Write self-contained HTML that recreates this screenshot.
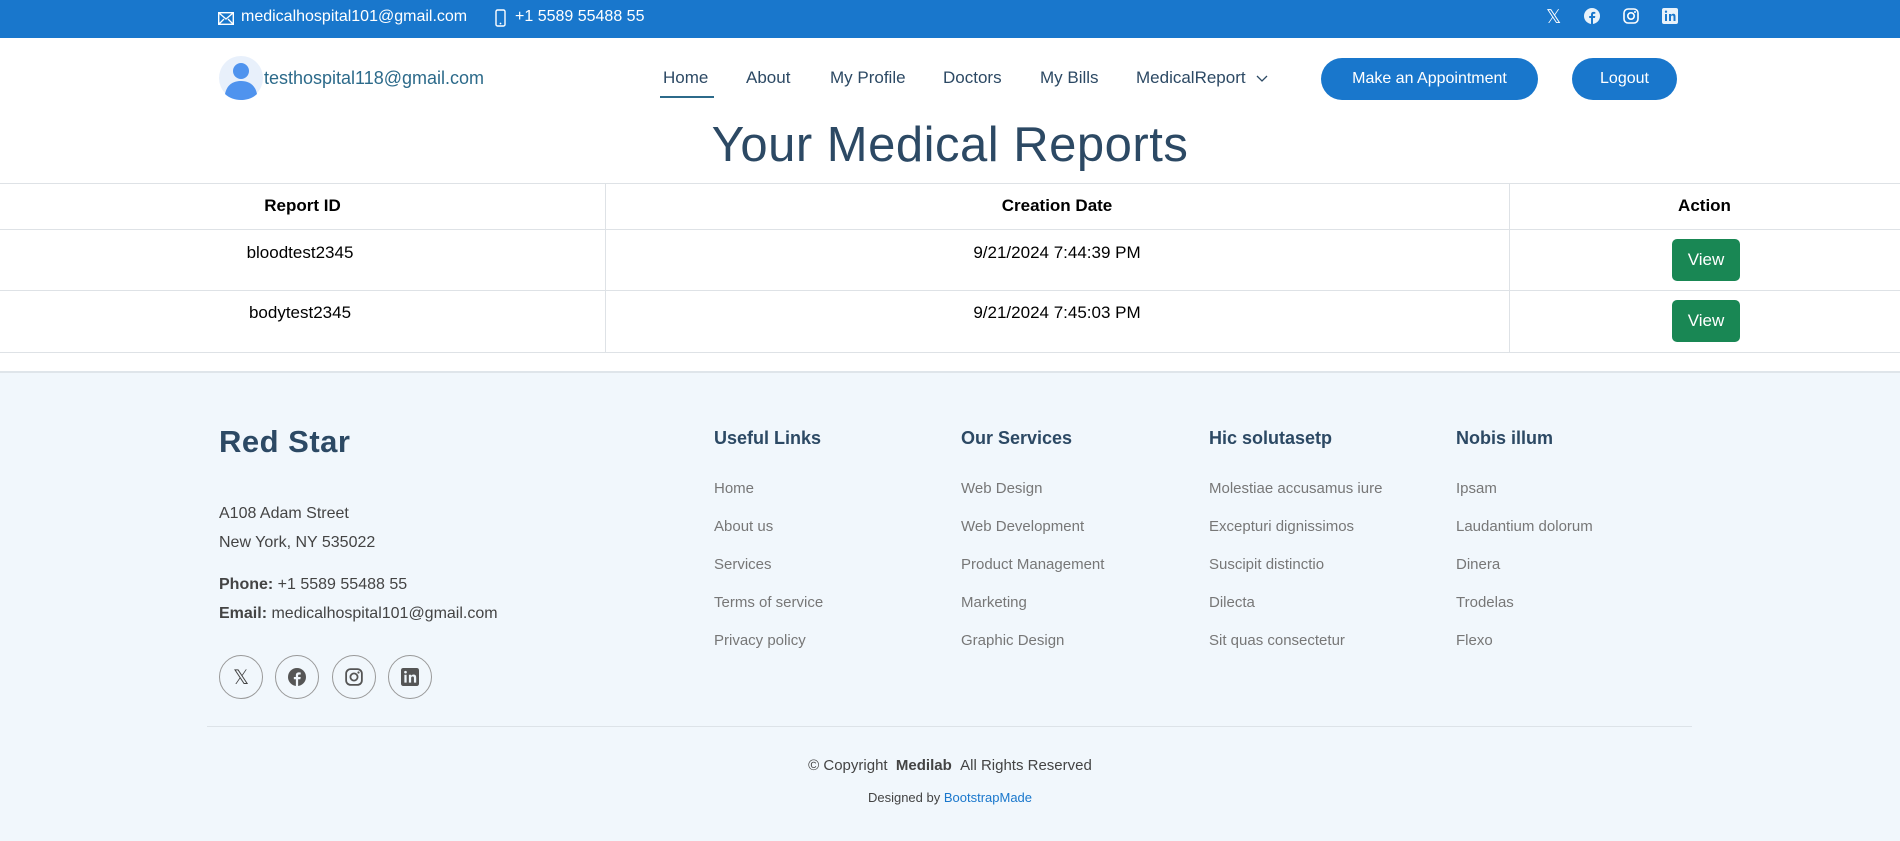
<!DOCTYPE html>
<html><head><meta charset="utf-8"><style>
*{margin:0;padding:0;box-sizing:border-box}
body{width:1900px;height:841px;overflow:hidden;background:#fff;font-family:"Liberation Sans",sans-serif;position:relative;color:#000}
.a{position:absolute;white-space:nowrap}
.top{position:absolute;left:0;top:0;width:1900px;height:38px;background:#1977cc;color:#fff;font-size:16px}
.nav{font-size:17px;color:#2c4964;top:68px}
.btn{position:absolute;background:#1977cc;color:#fff;border-radius:22px;font-size:16px;display:flex;align-items:center;justify-content:center}
.th{font-weight:bold;font-size:17px;top:196px}
.td{font-size:17px}
.view{position:absolute;left:1672px;width:68px;height:42px;background:#198754;color:#fff;border-radius:5px;font-size:17px;display:flex;align-items:center;justify-content:center}
.foot{position:absolute;left:0;top:371px;width:1900px;height:470px;background:#f1f7fc;border-top:2px solid #dfe5ea}
.h4{font-weight:bold;font-size:18px;color:#2c4964}
.lk{font-size:15px;color:#777}
.ft{font-size:16px;color:#444}
.circ{position:absolute;top:655px;width:44px;height:44px;border:1px solid #999;border-radius:50%;display:flex;align-items:center;justify-content:center}
</style></head><body>
<div class="top">
<svg class="a" style="left:218px;top:12px" width="16" height="13" viewBox="0 0 16 13"><rect x="0.7" y="0.7" width="14.6" height="11.6" fill="none" stroke="#fff" stroke-width="1.4"/><path d="M1 1l7 6 7-6M1 12l5-5M15 12l-5-5" fill="none" stroke="#fff" stroke-width="1.3"/></svg>
<div class="a" style="left:241px;top:8px">medicalhospital101@gmail.com</div>
<svg class="a" style="left:495px;top:9px" width="11" height="18" viewBox="0 0 11 18"><rect x="1" y="1" width="9" height="16" rx="1.5" fill="none" stroke="#fff" stroke-width="1.4"/><circle cx="5.5" cy="14.5" r="0.9" fill="#fff"/></svg>
<div class="a" style="left:515px;top:8px">+1 5589 55488 55</div>
<div class="a" style="left:1546px;top:6px;font-size:19px">𝕏</div>
<svg class="a" style="left:1584px;top:8px" width="16" height="16" viewBox="0 0 16 16"><circle cx="8" cy="8" r="8" fill="#fff" opacity=".9"/><path d="M9 16V10h2l.3-2H9V6.8c0-.6.2-1 1-1h1.3V4a10 10 0 0 0-1.8-.1C8 3.9 7 4.8 7 6.5V8H5.2v2H7v6z" fill="#1977cc"/></svg>
<svg class="a" style="left:1623px;top:8px" width="16" height="16" viewBox="0 0 16 16"><rect x="1" y="1" width="14" height="14" rx="4" fill="none" stroke="#fff" stroke-width="1.6"/><circle cx="8" cy="8" r="3.2" fill="none" stroke="#fff" stroke-width="1.6"/><circle cx="12" cy="4" r="1" fill="#fff"/></svg>
<svg class="a" style="left:1662px;top:8px" width="16" height="16" viewBox="0 0 16 16"><rect width="16" height="16" rx="2" fill="#fff" opacity=".9"/><path d="M3 6h2v7H3zM4 2.5a1.2 1.2 0 1 1 0 2.4 1.2 1.2 0 0 1 0-2.4zM7 6h2v1c.4-.7 1.2-1.2 2.2-1.2 2 0 2.3 1.3 2.3 3V13h-2V9.3c0-.9 0-1.8-1.2-1.8S9 8.4 9 9.2V13H7z" fill="#1977cc"/></svg>
</div>
<svg class="a" style="left:219px;top:56px" width="44" height="44" viewBox="0 0 44 44"><circle cx="22" cy="22" r="22" fill="#e8f0fb"/><circle cx="22" cy="15" r="8" fill="#4f93ee"/><path d="M6 38c2-10 9-13 16-13s14 3 16 13c-4 4-10 6-16 6S10 42 6 38z" fill="#4f93ee"/></svg>
<div class="a" style="left:264px;top:68px;font-size:18px;color:#2c6a8a">testhospital118@gmail.com</div>
<div class="a nav" style="left:663px">Home</div>
<div class="a" style="left:660px;top:96px;width:54px;height:2px;background:#2c6a8a"></div>
<div class="a nav" style="left:746px">About</div>
<div class="a nav" style="left:830px">My Profile</div>
<div class="a nav" style="left:943px">Doctors</div>
<div class="a nav" style="left:1040px">My Bills</div>
<div class="a nav" style="left:1136px">MedicalReport</div>
<svg class="a" style="left:1256px;top:75px" width="12" height="8" viewBox="0 0 12 8"><path d="M1 1l5 5 5-5" fill="none" stroke="#2c4964" stroke-width="1.3"/></svg>
<div class="btn" style="left:1321px;top:58px;width:217px;height:42px">Make an Appointment</div>
<div class="btn" style="left:1572px;top:58px;width:105px;height:42px">Logout</div>
<div class="a" style="left:0;width:1900px;text-align:center;top:117px;font-size:49px;color:#2c4964;letter-spacing:0.5px">Your Medical Reports</div>
<div class="a" style="left:0;top:183px;width:1900px;height:1px;background:#dee2e6"></div>
<div class="a" style="left:0;top:229px;width:1900px;height:1px;background:#dee2e6"></div>
<div class="a" style="left:0;top:290px;width:1900px;height:1px;background:#dee2e6"></div>
<div class="a" style="left:0;top:352px;width:1900px;height:1px;background:#dee2e6"></div>
<div class="a" style="left:605px;top:183px;width:1px;height:169px;background:#dee2e6"></div>
<div class="a" style="left:1509px;top:183px;width:1px;height:169px;background:#dee2e6"></div>
<div class="a th" style="left:0;width:605px;text-align:center">Report ID</div>
<div class="a th" style="left:605px;width:904px;text-align:center">Creation Date</div>
<div class="a th" style="left:1509px;width:391px;text-align:center">Action</div>
<div class="a td" style="left:0;width:600px;text-align:center;top:243px">bloodtest2345</div>
<div class="a td" style="left:605px;width:904px;text-align:center;top:243px">9/21/2024 7:44:39 PM</div>
<div class="a td" style="left:0;width:600px;text-align:center;top:303px">bodytest2345</div>
<div class="a td" style="left:605px;width:904px;text-align:center;top:303px">9/21/2024 7:45:03 PM</div>
<div class="view" style="top:239px">View</div>
<div class="view" style="top:300px">View</div>
<div class="foot"></div>
<div class="a" style="left:219px;top:424px;font-size:31px;font-weight:bold;color:#2c4964;letter-spacing:0.5px">Red Star</div>
<div class="a ft" style="left:219px;top:505px">A108 Adam Street</div>
<div class="a ft" style="left:219px;top:534px">New York, NY 535022</div>
<div class="a ft" style="left:219px;top:576px"><b>Phone:</b> +1 5589 55488 55</div>
<div class="a ft" style="left:219px;top:605px"><b>Email:</b> medicalhospital101@gmail.com</div>
<div class="circ" style="left:219px;font-size:20px;color:#444">𝕏</div>
<div class="circ" style="left:275px"><svg width="18" height="18" viewBox="0 0 16 16"><circle cx="8" cy="8" r="8" fill="#555"/><path d="M9 16V10h2l.3-2H9V6.8c0-.6.2-1 1-1h1.3V4a10 10 0 0 0-1.8-.1C8 3.9 7 4.8 7 6.5V8H5.2v2H7v6z" fill="#f1f7fc"/></svg></div>
<div class="circ" style="left:332px"><svg width="18" height="18" viewBox="0 0 16 16"><rect x="1" y="1" width="14" height="14" rx="4" fill="none" stroke="#555" stroke-width="1.6"/><circle cx="8" cy="8" r="3.2" fill="none" stroke="#555" stroke-width="1.6"/><circle cx="12" cy="4" r="1" fill="#555"/></svg></div>
<div class="circ" style="left:388px"><svg width="18" height="18" viewBox="0 0 16 16"><rect width="16" height="16" rx="2" fill="#555"/><path d="M3 6h2v7H3zM4 2.5a1.2 1.2 0 1 1 0 2.4 1.2 1.2 0 0 1 0-2.4zM7 6h2v1c.4-.7 1.2-1.2 2.2-1.2 2 0 2.3 1.3 2.3 3V13h-2V9.3c0-.9 0-1.8-1.2-1.8S9 8.4 9 9.2V13H7z" fill="#f1f7fc"/></svg></div>
<div class="a h4" style="left:714px;top:428px">Useful Links</div>
<div class="a h4" style="left:961px;top:428px">Our Services</div>
<div class="a h4" style="left:1209px;top:428px">Hic solutasetp</div>
<div class="a h4" style="left:1456px;top:428px">Nobis illum</div>
<div class="a lk" style="left:714px;top:470px;line-height:38px">Home<br>About us<br>Services<br>Terms of service<br>Privacy policy</div>
<div class="a lk" style="left:961px;top:470px;line-height:38px">Web Design<br>Web Development<br>Product Management<br>Marketing<br>Graphic Design</div>
<div class="a lk" style="left:1209px;top:470px;line-height:38px">Molestiae accusamus iure<br>Excepturi dignissimos<br>Suscipit distinctio<br>Dilecta<br>Sit quas consectetur</div>
<div class="a lk" style="left:1456px;top:470px;line-height:38px">Ipsam<br>Laudantium dolorum<br>Dinera<br>Trodelas<br>Flexo</div>
<div class="a" style="left:207px;top:726px;width:1485px;height:1px;background:#dde3e8"></div>
<div class="a" style="left:0;width:1900px;text-align:center;top:757px;font-size:15px;color:#444">© Copyright &nbsp;<b>Medilab</b> &nbsp;All Rights Reserved</div>
<div class="a" style="left:0;width:1900px;text-align:center;top:790px;font-size:13px;color:#444">Designed by <span style="color:#1977cc">BootstrapMade</span></div>
</body></html>
